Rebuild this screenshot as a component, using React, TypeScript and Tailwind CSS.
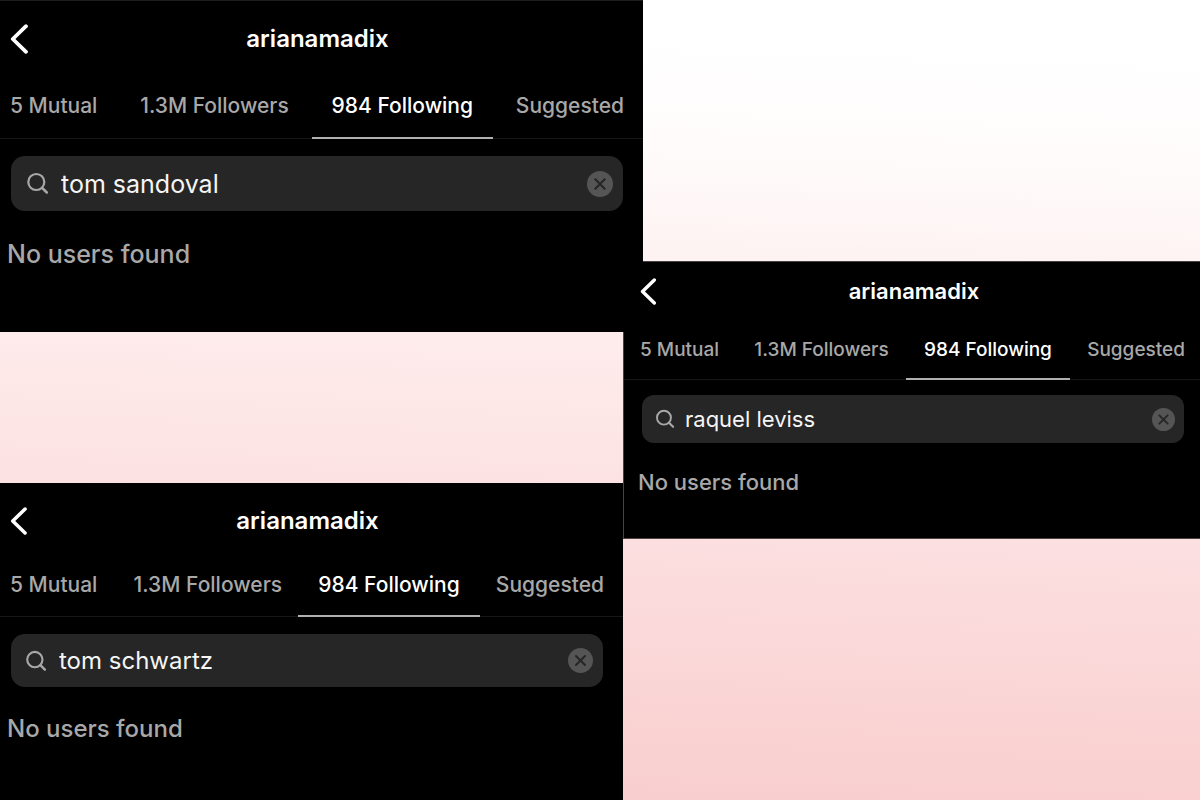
import { useState } from 'react'

type Size = 'lg' | 'md' | 'sm'

type Props = {
  id: string
  size: Size
  username: string
  initialQuery: string
}

const TABS = ['5 Mutual', '1.3M Followers', '984 Following', 'Suggested']

const styles = {
  lg: {
    panel: 'relative z-10 -mr-5 border-t border-[#1c1c1c]',
    header: 'h-[75px] pr-10',
    back: 'w-8 pl-[10px]',
    chevron: 'h-[30px] w-[19px]',
    title: 'text-[24px]',
    nav: 'h-[63px] pl-[10px] pr-[19px]',
    tab: 'text-[21px] pb-px',
    activeTab: '-mx-5 px-5',
    search: 'mt-[17px] ml-[11px] mr-5 h-[55px] rounded-[14px] pl-[15px] pr-[10px]',
    icon: 'size-[23px]',
    input: 'ml-3 text-[25px]',
    clear: 'size-[26px]',
    empty: 'mt-[27px] pb-[62px] pl-[7px] text-[25px]',
  },
  md: {
    panel: '',
    header: 'h-[75px] pr-10',
    back: 'w-8 pl-[10px]',
    chevron: 'h-[28px] w-[18px]',
    title: 'text-[24px]',
    nav: 'h-[59px] pl-[10px] pr-[19px]',
    tab: 'text-[21px] pb-[3px]',
    activeTab: '-mx-5 px-5',
    search: 'mt-[17px] ml-[11px] mr-5 h-[53px] rounded-[14px] pl-[14px] pr-[10px]',
    icon: 'size-[22px]',
    input: 'ml-3 text-[24px]',
    clear: 'size-[25px]',
    empty: 'mt-[26px] pb-[55px] pl-[7px] text-[24px]',
  },
  sm: {
    panel: 'border-y border-l border-[#4a4243]',
    header: 'h-[58px] pr-9',
    back: 'relative z-20 w-10 pl-4',
    chevron: 'h-[27px] w-[17px]',
    title: 'text-[22px]',
    nav: 'h-[60px] pl-4 pr-[15px]',
    tab: 'text-[19px] pt-[3px]',
    activeTab: '-mx-[18px] px-[18px]',
    search: 'mt-[15px] ml-[18px] mr-4 h-[48px] rounded-xl pl-[13px] pr-[9px]',
    icon: 'size-[20px]',
    input: 'ml-[10px] text-[22px]',
    clear: 'size-[23px]',
    empty: 'mt-[23px] pb-[40px] pl-[14px] text-[22px]',
  },
}

function BackIcon({ className }: { className: string }) {
  return (
    <svg viewBox="0 0 19 30" fill="none" className={className} aria-hidden="true">
      <path d="M16 2.2 2.8 15 16 27.8" stroke="#fff" strokeWidth="3.8" strokeLinecap="round" strokeLinejoin="round" />
    </svg>
  )
}

function SearchIcon({ className }: { className: string }) {
  return (
    <svg viewBox="0 0 23 23" fill="none" className={className} aria-hidden="true">
      <circle cx="10.3" cy="10" r="8" stroke="#a8a8a8" strokeWidth="2.2" />
      <path d="m16.1 15.8 4.7 4.7" stroke="#a8a8a8" strokeWidth="2.5" strokeLinecap="round" />
    </svg>
  )
}

function ClearIcon({ className }: { className: string }) {
  return (
    <svg viewBox="0 0 26 26" fill="none" className={className} aria-hidden="true">
      <circle cx="13" cy="13" r="13" fill="#555" />
      <path d="m8.3 8.3 9.4 9.4M17.7 8.3l-9.4 9.4" stroke="#262626" strokeWidth="2.1" strokeLinecap="round" />
    </svg>
  )
}

function FollowPanel({ id, size, username, initialQuery }: Props) {
  const [query, setQuery] = useState(initialQuery)
  const [active, setActive] = useState('984 Following')
  const s = styles[size]

  return (
    <section className={`bg-black text-white ${s.panel}`}>
      <header className={`flex items-center ${s.header}`}>
        <button type="button" aria-label="Back" className={`flex-shrink-0 ${s.back}`}>
          <BackIcon className={s.chevron} />
        </button>
        <h2 className={`flex-1 text-center font-semibold leading-8 ${s.title}`}>{username}</h2>
      </header>

      <nav className={`flex justify-between border-b border-[#161616] ${s.nav}`}>
        {TABS.map((tab) => (
          <button
            key={tab}
            type="button"
            onClick={() => setActive(tab)}
            className={`-mb-px whitespace-nowrap border-b-2 font-medium ${s.tab} ${
              tab === active ? `border-[#b0b0b0] text-white ${s.activeTab}` : 'border-transparent text-[#a8a8a8]'
            }`}
          >
            {tab}
          </button>
        ))}
      </nav>

      {/* Search box */}
      <div className={`flex items-center bg-[#262626] ${s.search}`}>
        <label htmlFor={id} aria-label="Search" className="flex-shrink-0">
          <SearchIcon className={s.icon} />
        </label>
        <input
          id={id}
          type="text"
          value={query}
          onChange={(e) => setQuery(e.target.value)}
          className={`min-w-0 flex-1 bg-transparent leading-8 text-[#f5f5f5] outline-none ${s.input}`}
        />
        <button type="button" aria-label="Clear search" onClick={() => setQuery('')} className="flex-shrink-0">
          <ClearIcon className={s.clear} />
        </button>
      </div>

      <p className={`font-medium leading-8 text-[#a8a8a8] ${s.empty}`}>No users found</p>
    </section>
  )
}

export default function App() {
  return (
    <main className="grid min-h-screen grid-cols-[623fr_577fr] bg-[linear-gradient(182deg,#ffffff_7%,#fffbfb_20%,#fef2f2_33%,#feebeb_44%,#fcdfe0_66%,#f9cece_97%)] font-['Inter',sans-serif]">
      <div className="flex min-w-0 flex-col justify-between">
        <FollowPanel id="search-sandoval" size="lg" username="arianamadix" initialQuery="tom sandoval" />
        <FollowPanel id="search-schwartz" size="md" username="arianamadix" initialQuery="tom schwartz" />
      </div>
      <div className="flex min-w-0 flex-col justify-center">
        <FollowPanel id="search-leviss" size="sm" username="arianamadix" initialQuery="raquel leviss" />
      </div>
    </main>
  )
}
